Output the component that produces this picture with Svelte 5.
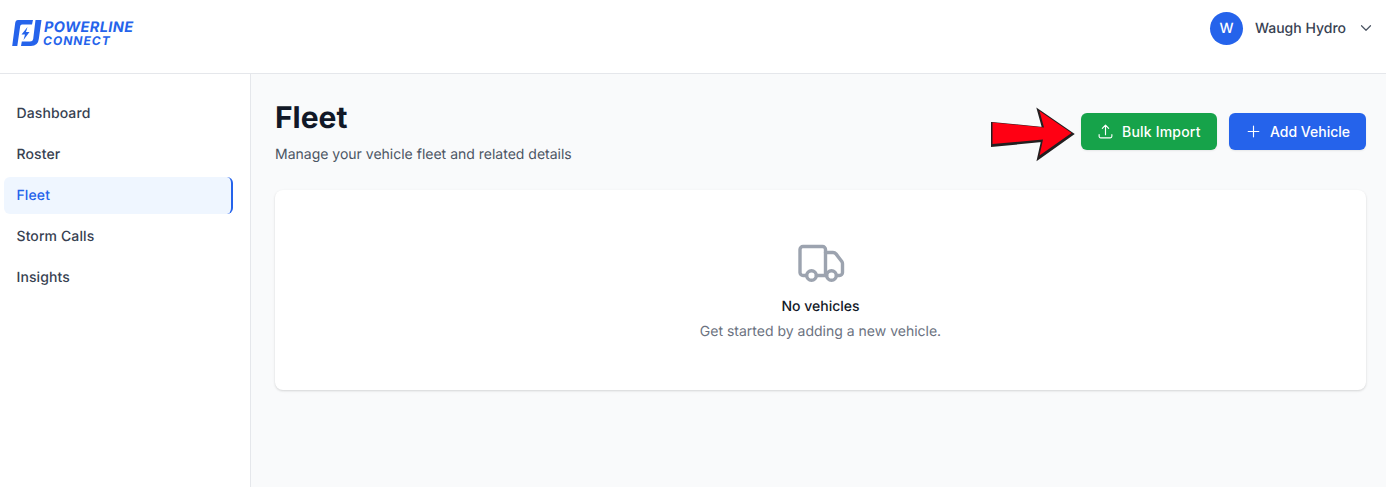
<script lang="ts">
    const navItems = ["Dashboard", "Roster", "Fleet", "Storm Calls", "Insights"];
    let current = "Fleet";
</script>

<div class="page">
    <header class="topbar">
        <div class="logo">
            <svg class="logo-mark" width="30" height="28" viewBox="0 0 30 28" aria-hidden="true">
                <path d="M6 1 H21 L20 5.5 H10 Q8.5 5.5 8.2 7 L5.3 27 H0.2 L3.2 4 Q3.6 1 6 1 Z" fill="#2563eb" />
                <path d="M23.5 1 H29.5 L26.8 20 Q26 27 19 27 H9 L9.8 22.5 H18 Q20.8 22.5 21.2 20 Z" fill="#2563eb" />
                <path d="M15.5 8 L9.5 15.5 H13 L11.5 21 L17.5 13 H14 Z" fill="#2563eb" />
            </svg>
            <div class="logo-text">
                <span class="logo-top">POWERLINE</span>
                <span class="logo-bottom">CONNECT</span>
            </div>
        </div>
        <div class="user">
            <span class="avatar">W</span>
            <span class="user-name">Waugh Hydro</span>
            <svg width="12" height="12" viewBox="0 0 24 24" fill="none" stroke="#4b5563" stroke-width="2.4" stroke-linecap="round" stroke-linejoin="round" aria-hidden="true">
                <path d="M3 7.5l9 9 9-9" />
            </svg>
        </div>
    </header>

    <div class="body">
        <nav class="sidebar">
            {#each navItems as item}
                <div class="nav-item" class:active={item === current}>{item}</div>
            {/each}
        </nav>

        <main class="content">
            <div class="head">
                <div>
                    <h1>Fleet</h1>
                    <p class="subtitle">Manage your vehicle fleet and related details</p>
                </div>
                <div class="actions">
                    <button class="btn btn-green">
                        <svg width="17" height="17" viewBox="0 0 24 24" fill="none" stroke="currentColor" stroke-width="1.6" stroke-linecap="round" stroke-linejoin="round" aria-hidden="true">
                            <path d="M3 16.5v2.25A2.25 2.25 0 0 0 5.25 21h13.5A2.25 2.25 0 0 0 21 18.75V16.5M7.5 7.5 12 3m0 0 4.5 4.5M12 3v13.5" />
                        </svg>
                        Bulk Import
                    </button>
                    <button class="btn btn-blue">
                        <svg width="17" height="17" viewBox="0 0 24 24" fill="none" stroke="currentColor" stroke-width="1.6" stroke-linecap="round" stroke-linejoin="round" aria-hidden="true">
                            <path d="M12 4.5v15m7.5-7.5h-15" />
                        </svg>
                        Add Vehicle
                    </button>
                </div>
            </div>

            <section class="card">
                <svg class="truck" width="48" height="48" viewBox="0 0 48 48" fill="none" stroke="#9ca3af" stroke-width="3.4" stroke-linecap="round" stroke-linejoin="round" aria-hidden="true">
                    <path d="M9.5 35.5 H6 a3 3 0 0 1-3-3 V9.5 a3 3 0 0 1 3-3 H25.5 a3 3 0 0 1 3 3 V35.5" />
                    <path d="M19.5 35.5 H29.5" />
                    <path d="M28.5 12.5 H36 a4 4 0 0 1 3 1.4 L44.8 21.5 a4 4 0 0 1 .7 2.2 V32.5 a3 3 0 0 1-3 3 H39.5" />
                    <circle cx="14.5" cy="35.5" r="4.8" />
                    <circle cx="34.5" cy="35.5" r="4.8" />
                </svg>
                <h3>No vehicles</h3>
                <p>Get started by adding a new vehicle.</p>
            </section>
        </main>
    </div>

    <!-- red annotation arrow drawn over the screenshot -->
    <svg class="arrow" width="86" height="56" viewBox="0 0 86 56" aria-hidden="true">
        <path d="M2 16 L53 21 L48 3 L83 27 L48 52 L52 34 L2 39 Z" fill="#231f20" stroke="#231f20" stroke-width="2" stroke-linejoin="miter" transform="translate(0 1)" />
        <path d="M2.5 16.5 L54 21.5 L49.5 5 L81.5 27 L49.5 49.5 L53 33.5 L2.5 38 Z" fill="#ff0013" />
    </svg>
</div>

<style>
    :global(body) {
        margin: 0;
        font-family: Inter, "Liberation Sans", sans-serif;
        text-rendering: geometricPrecision;
        background: #f9fafb;
    }

    .page {
        position: relative;
        width: 1386px;
        height: 487px;
        overflow: hidden;
        display: flex;
        flex-direction: column;
    }

    .topbar {
        height: 73px;
        flex-shrink: 0;
        background: #fff;
        border-bottom: 1px solid #e5e7eb;
        display: flex;
        align-items: center;
        justify-content: space-between;
        padding: 0 14px 0 12px;
    }

    .logo {
        display: flex;
        align-items: center;
        gap: 2px;
        margin-top: -7px;
    }

    .logo-text {
        display: flex;
        flex-direction: column;
        font-style: italic;
        font-weight: 700;
        color: #2563eb;
        line-height: 13px;
        margin-top: 1px;
    }

    .logo-top {
        font-size: 14.5px;
        letter-spacing: 0.4px;
    }

    .logo-bottom {
        font-size: 12px;
        letter-spacing: 1px;
        margin-left: -1px;
    }

    .user {
        display: flex;
        align-items: center;
        margin-top: -17px;
    }

    .avatar {
        width: 33px;
        height: 33px;
        border-radius: 50%;
        background: #2563eb;
        color: #fff;
        font-size: 14px;
        font-weight: 500;
        display: flex;
        align-items: center;
        justify-content: center;
    }

    .user-name {
        margin: 0 14px 0 12px;
        font-size: 14px;
        font-weight: 500;
        color: #374151;
    }

    .body {
        flex: 1;
        display: flex;
        min-height: 0;
    }

    .sidebar {
        width: 251px;
        flex-shrink: 0;
        box-sizing: border-box;
        background: #fff;
        border-right: 1px solid #e5e7eb;
        padding: 21px 17px 0 4px;
        display: flex;
        flex-direction: column;
        gap: 4px;
    }

    .nav-item {
        height: 37px;
        box-sizing: border-box;
        padding: 0 12.5px 1px;
        display: flex;
        align-items: center;
        border-radius: 6px;
        font-size: 14px;
        font-weight: 500;
        letter-spacing: 0.1px;
        color: #374151;
    }

    .nav-item.active {
        background: #eff6ff;
        color: #2563eb;
        border-right: 2px solid #2563eb;
    }

    .content {
        flex: 1;
        padding: 26px 20px 0 24px;
    }

    .head {
        display: flex;
        justify-content: space-between;
        align-items: flex-start;
    }

    h1 {
        margin: 0;
        font-size: 30px;
        line-height: 36px;
        font-weight: 700;
        color: #111827;
    }

    .subtitle {
        margin: 9px 0 0;
        font-size: 14px;
        line-height: 20px;
        color: #4b5563;
    }

    .actions {
        display: flex;
        gap: 12px;
        margin-top: 13px;
    }

    .btn {
        height: 37px;
        border: none;
        border-radius: 6px;
        color: #fff;
        font-family: inherit;
        font-size: 14px;
        font-weight: 500;
        display: flex;
        align-items: center;
        gap: 8px;
        box-shadow: 0 1px 2px rgba(0, 0, 0, 0.08);
    }

    .btn-green {
        width: 136px;
        padding: 0 0 0 16px;
        letter-spacing: 0.2px;
        background: #16a34a;
    }

    .btn-blue {
        width: 137px;
        padding: 0 0 0 16px;
        background: #2563eb;
    }

    .card {
        margin-top: 25px;
        height: 200px;
        box-sizing: border-box;
        background: #fff;
        border-radius: 8px;
        box-shadow: 0 1px 3px rgba(0, 0, 0, 0.1), 0 1px 2px rgba(0, 0, 0, 0.06);
        display: flex;
        flex-direction: column;
        align-items: center;
        padding-top: 50px;
    }

    .truck {
        display: block;
    }

    h3 {
        margin: 9px 0 0;
        font-size: 14px;
        line-height: 20px;
        font-weight: 500;
        color: #111827;
    }

    .card p {
        margin: 5px 0 0;
        font-size: 14px;
        line-height: 20px;
        color: #6b7280;
    }

    .arrow {
        position: absolute;
        left: 990px;
        top: 106px;
    }
</style>
